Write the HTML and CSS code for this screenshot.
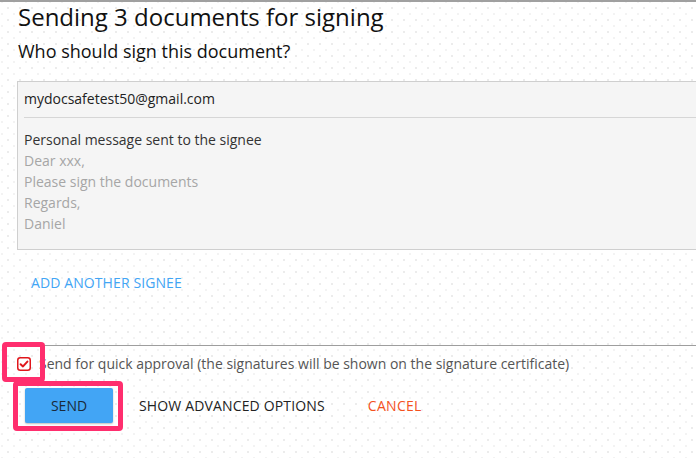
FILE: index.html
```html
<!DOCTYPE html>
<html lang="en">
<head>
<meta charset="utf-8">
<title>Sending documents for signing</title>
<link rel="stylesheet" href="styles.css">
</head>
<body>
<div class="page">
  <h1 class="title">Sending 3 documents for signing</h1>
  <h2 class="subtitle">Who should sign this document?</h2>

  <div class="signee-box">
    <div class="email">mydocsafetest50@gmail.com</div>
    <div class="message">
      <div class="msg-label">Personal message sent to the signee</div>
      <div class="msg-body">Dear xxx,<br>Please sign the documents<br>Regards,<br>Daniel</div>
    </div>
  </div>

  <div class="add-row"><a class="add-signee">ADD ANOTHER SIGNEE</a></div>

  <div class="footer">
    <label class="quick">
      <span class="checkbox">
        <svg width="14" height="14" viewBox="0 0 14 14" aria-hidden="true">
          <rect x="0.75" y="0.75" width="12.5" height="12.5" rx="2.5" fill="#fff" stroke="#e0161b" stroke-width="1.5"/>
          <path d="M3.6 7.2 L6 9.4 L10.4 4.6" fill="none" stroke="#e0161b" stroke-width="2" stroke-linecap="round" stroke-linejoin="round"/>
        </svg>
      </span>
      <span class="quick-text">Send for quick approval (the signatures will be shown on the signature certificate)</span>
      <span class="highlight hl-check"></span>
    </label>
    <div class="actions">
      <span class="send-wrap">
        <button class="btn btn-send">SEND</button>
        <span class="highlight hl-send"></span>
      </span>
      <button class="btn btn-flat">SHOW ADVANCED OPTIONS</button>
      <button class="btn btn-cancel">CANCEL</button>
    </div>
  </div>
</div>
</body>
</html>
```

FILE: styles.css
```css
html, body {
  margin: 0;
  padding: 0;
}
body {
  width: 696px;
  height: 458px;
  overflow: hidden;
  font-family: "Open Sans", "DejaVu Sans", sans-serif;
  color: #222;
  background-color: #fff;
  background-image:
    radial-gradient(circle, #ececec 0.9px, transparent 1.2px),
    radial-gradient(circle, #f3f3f3 0.9px, transparent 1.2px);
  background-size: 12px 12px, 12px 12px;
  background-position: 2px 2px, 8px 8px;
  border-top: 2px solid #a0a0a0;
  box-sizing: border-box;
}
.page {
  padding-left: 18px;
}
.title {
  margin: 0;
  font-size: 24px;
  font-weight: 400;
  line-height: 30px;
  color: #111;
}
.subtitle {
  margin: 7px 0 0;
  font-size: 18px;
  font-weight: 400;
  line-height: 24px;
  color: #111;
}
.signee-box {
  margin-top: 18px;
  margin-left: -1px;
  background: #f5f5f5;
  border: 1px solid #cfcfcf;
  border-right: none;
  height: 167px;
  padding-left: 6px;
}
.email {
  font-size: 14px;
  line-height: 20px;
  padding: 7px 0 8px;
  border-bottom: 1px solid #d6d6d6;
  color: #222;
}
.message {
  padding-top: 11px;
  font-size: 14px;
  line-height: 21px;
}
.msg-label {
  color: #333;
}
.msg-body {
  color: #a6a6a6;
}
.add-row {
  padding: 21px 0 0 13px;
}
.add-signee {
  font-size: 14px;
  line-height: 20px;
  color: #42a5f5;
  letter-spacing: 0.1px;
}
.footer {
  margin-top: 52px;
  border-top: 1px solid #9e9e9e;
}
.quick {
  position: relative;
  display: flex;
  align-items: center;
  gap: 8px;
  padding-top: 7px;
  height: 22px;
  font-size: 14px;
  color: #555;
}
.checkbox {
  display: flex;
  width: 14px;
  height: 14px;
  margin-left: -1px;
}
.quick-text {
  line-height: 22px;
}
.highlight {
  position: absolute;
  border: 5px solid #ff2e6e;
  border-radius: 4px;
  box-sizing: border-box;
  pointer-events: none;
}
.hl-check {
  left: -16px;
  top: -4px;
  width: 43px;
  height: 40px;
}
.actions {
  display: flex;
  align-items: center;
  margin-top: 13px;
  margin-left: 7px;
}
.send-wrap {
  position: relative;
  display: flex;
}
.hl-send {
  left: -12px;
  top: -7px;
  right: -10px;
  bottom: -8px;
}
.btn {
  font-family: "Open Sans", "DejaVu Sans", sans-serif;
  font-size: 14px;
  background: none;
  border: none;
  padding: 0;
  cursor: pointer;
}
.btn-send {
  width: 88px;
  height: 35px;
  background: #42a5f5;
  color: #1a2a3a;
  border-radius: 2px;
  box-shadow: 0 1px 2px rgba(0,0,0,0.25);
}
.btn-flat {
  margin-left: 26px;
  color: #222;
  letter-spacing: 0.15px;
}
.btn-cancel {
  margin-left: 43px;
  color: #f4511e;
  letter-spacing: 0.3px;
}
```
